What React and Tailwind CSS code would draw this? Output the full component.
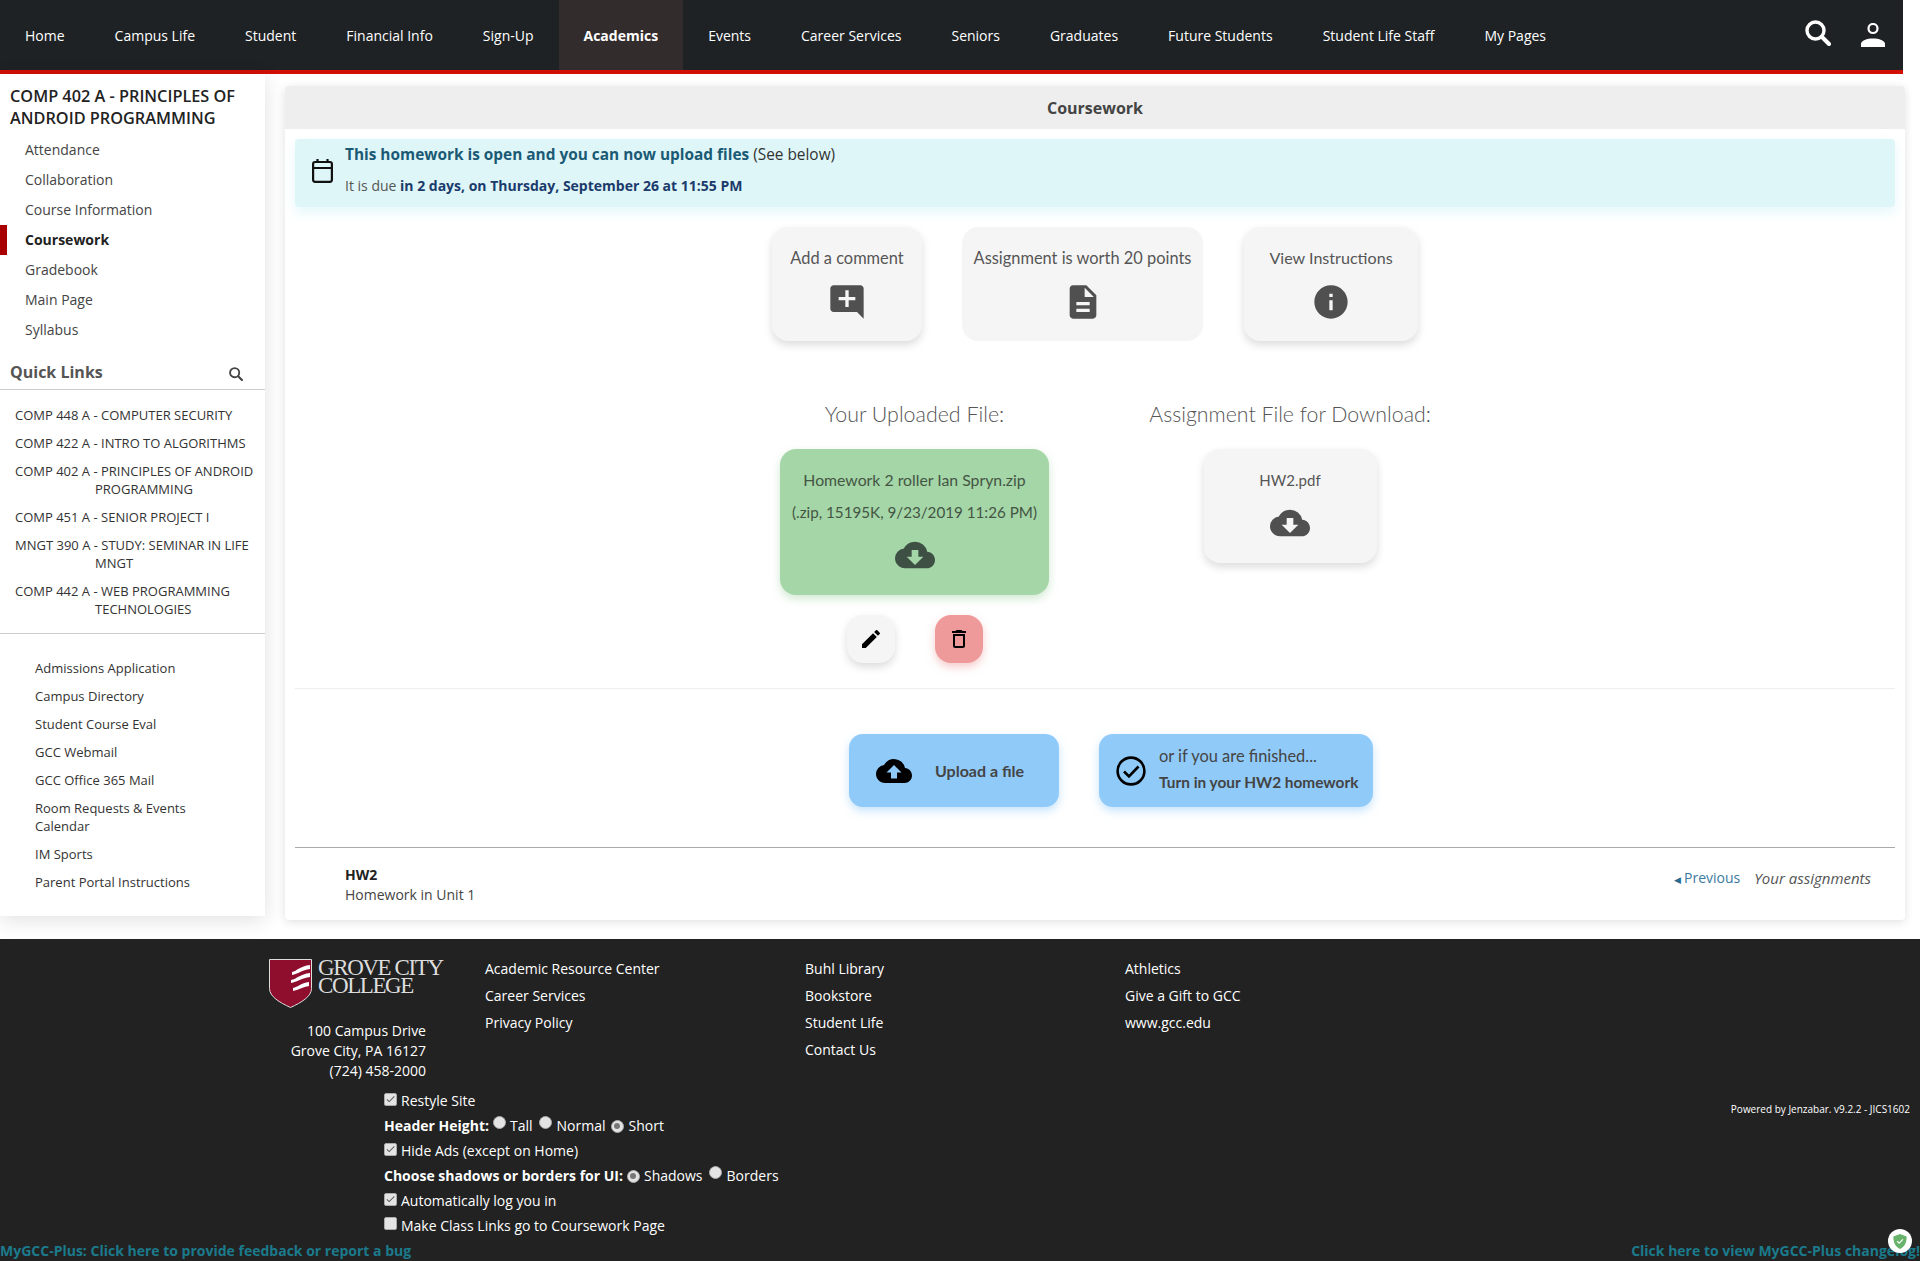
import React from "react";
import { MdAddComment, MdDescription, MdInfo, MdCloudDownload, MdCloudUpload, MdEdit, MdDeleteOutline, MdCheck } from "react-icons/md";

const nav = ["Home","Campus Life","Student","Financial Info","Sign-Up","Academics","Events","Career Services","Seniors","Graduates","Future Students","Student Life Staff","My Pages"];
const course = ["Attendance","Collaboration","Course Information","Coursework","Gradebook","Main Page","Syllabus"];
const quick = ["COMP 448 A - COMPUTER SECURITY","COMP 422 A - INTRO TO ALGORITHMS","COMP 402 A - PRINCIPLES OF ANDROID PROGRAMMING","COMP 451 A - SENIOR PROJECT I","MNGT 390 A - STUDY: SEMINAR IN LIFE MNGT","COMP 442 A - WEB PROGRAMMING TECHNOLOGIES"];
const misc = ["Admissions Application","Campus Directory","Student Course Eval","GCC Webmail","GCC Office 365 Mail","Room Requests & Events Calendar","IM Sports","Parent Portal Instructions"];
const open = "font-['Open_Sans',sans-serif]";
const card = "font-['Lato',sans-serif]";

function SearchIcon({ className }) {
  return (
    <svg viewBox="0 0 26 26" className={className} fill="none" stroke="currentColor">
      <circle cx="10.500" cy="10.500" r="8.500" strokeWidth="3.400" />
      <path d="M17 17l7 7" strokeWidth="4" strokeLinecap="round" />
    </svg>
  );
}
function Check({ on }) {
  return (
    <span className="mr-[4px] inline-flex h-[13px] w-[13px] items-center justify-center rounded-[2px] border border-[#aaa] bg-[#e4e4e4] align-[1px]">
      {on && <MdCheck className="text-[12px] text-[#555]" />}
    </span>
  );
}
function Radio({ on, className = "mx-[4px]" }) {
  return (
    <span className={`inline-flex h-[13px] w-[13px] items-center justify-center rounded-full border border-[#aaa] bg-[#e4e4e4] align-[2px] ${className}`}>
      {on && <span className="h-[6px] w-[6px] rounded-full bg-[#777]" />}
    </span>
  );
}
function Tile({ w, h = "h-[114px]", bg = "bg-[#f5f5f5]", shadow = "shadow-[0_4px_8px_rgba(0,0,0,0.14)]", children }) {
  return <div className={`flex flex-col items-center rounded-[16px] ${w} ${h} ${bg} ${shadow} ${card} text-[#555]`}>{children}</div>;
}

export default function App() {
  return (
    <div className={`w-[1920px] overflow-hidden bg-white ${open} text-[14px] text-[#333]`}>
      <header className="flex h-[74px] w-[1903px] border-b-[4px] border-[#d10f02] bg-[#1e2224] text-white">
        {nav.map((n) => (
          <a key={n} className={`flex h-full items-center px-[25px] ${n === "Academics" ? "bg-[#332c2c] font-bold" : ""}`}>{n}</a>
        ))}
        <div className="ml-auto flex items-center gap-[30px] pr-[18px]">
          <SearchIcon className="mb-[4px] h-[26px] w-[26px]" />
          <svg viewBox="0 0 24 24" className="h-[24px] w-[24px]">
            <circle cx="12" cy="5.500" r="4.500" fill="none" stroke="currentColor" strokeWidth="2.200" />
            <path d="M0 24v-3c0-3.500 6-5.500 12-5.500s12 2 12 5.500v3z" fill="currentColor" />
          </svg>
        </div>
      </header>

      <div className="flex h-[865px] items-start">
        <aside className="h-[842px] w-[265px] shrink-0 bg-white shadow-[0_4px_20px_rgba(0,0,0,0.12)]">
          <h2 className="px-[10px] pt-[11px] text-[16.300px] leading-[22px] font-semibold text-[#222]">COMP 402 A - PRINCIPLES OF ANDROID PROGRAMMING</h2>
          <ul className="mt-[6px]">
            {course.map((c) => (
              <li key={c} className={`h-[30px] border-l-[7px] pl-[18px] leading-[30px] ${c === "Coursework" ? "border-[#a80000] font-bold text-[#222]" : "border-transparent text-[#444]"}`}>{c}</li>
            ))}
          </ul>
          <div className="mt-[15px] flex h-[30px] items-center justify-between border-b border-[#ccc] pr-[22px] pl-[10px] pb-[5px]">
            <span className="text-[16px] font-bold text-[#555]">Quick Links</span>
            <SearchIcon className="mt-[3px] h-[14px] w-[14px] text-[#444]" />
          </div>
          <ul className="border-b border-[#ccc] pt-[11px] pb-[10px] text-[13px] leading-[18px] text-[#333]">
            {quick.map((q) => (
              <li key={q} className="py-[5px] pr-[5px] pl-[95px] -indent-[80px]">{q}</li>
            ))}
          </ul>
          <ul className="pt-[20px] pr-[50px] pl-[35px] text-[13px] leading-[18px] text-[#333]">
            {misc.map((m) => <li key={m} className="py-[5px]">{m}</li>)}
          </ul>
        </aside>

        <main className="mt-[12px] ml-[20px] h-[834px] w-[1620px] shrink-0 rounded-[4px] bg-white shadow-[0_2px_10px_rgba(0,0,0,0.12)]">
          <div className="flex h-[43px] items-center justify-center rounded-t-[4px] bg-[#eee] text-[16px] font-bold text-[#444]">Coursework</div>
          <div className="px-[10px] pt-[10px]">
            <div className="flex h-[68px] items-center rounded-[4px] bg-[#dff6f8] pl-[17px] shadow-[0_6px_12px_rgba(128,222,234,0.2)]">
              <svg viewBox="0 0 21 24" className="mr-[12px] mb-[5px] h-[24px] w-[21px] text-[#111]" fill="none" stroke="currentColor" strokeWidth="2.200">
                <rect x="1.100" y="3" width="18.800" height="19.800" rx="2" />
                <path d="M1 9h19M5.500 0v4M15.500 0v4" />
              </svg>
              <div>
                <p className="mb-[11px] -mt-[6px] text-[15.400px] leading-[20px] text-[#333]"><b className="font-bold text-[#1a5a75]">This homework is open and you can now upload files</b> (See below)</p>
                <p className="leading-[20px] text-[#555]">It is due <b className="font-bold text-[#1a3b6b]">in 2 days, on Thursday, September 26 at 11:55 PM</b></p>
              </div>
            </div>

            <div className="mt-[20px] ml-[477px] flex">
              <Tile w="w-[150px]">
                <span className="mt-[20px] text-[16.400px] leading-[22px]">Add a comment</span>
                <MdAddComment className="mt-[13px] text-[40px] text-[#505050]" />
              </Tile>
              <div className="ml-[40px]"><Tile w="w-[241px]" shadow="">
                <span className="mt-[20px] text-[16.400px] leading-[22px]">Assignment is worth 20 points</span>
                <MdDescription className="mt-[13px] text-[40px] text-[#505050]" />
              </Tile></div>
              <div className="ml-[41px]"><Tile w="w-[174px]">
                <span className="mt-[20px] text-[16.100px] leading-[22px]">View Instructions</span>
                <MdInfo className="mt-[13px] text-[40px] text-[#505050]" />
              </Tile></div>
            </div>

            <div className="mt-[59px] flex items-start">
              <div className="ml-[475px] flex w-[289px] flex-col items-center">
                <h3 className="text-[21.400px] leading-[28px] font-light text-[#555] font-['Lato',sans-serif]">Your Uploaded File:</h3>
                <div className={`mt-[21px] flex h-[146px] w-[269px] flex-col items-center rounded-[16px] bg-[#a5d6a7] shadow-[0_4px_8px_rgba(165,214,167,0.5)] ${card} text-[#454]`}>
                  <span className="mt-[20px] text-[15.800px] leading-[22px]">Homework 2 roller Ian Spryn.zip</span>
                  <span className="mt-[10px] text-[15.200px] leading-[22px]">(.zip, 15195K, 9/23/2019 11:26 PM)</span>
                  <MdCloudDownload className="mt-[12px] text-[40px] text-[#3e4f44]" />
                </div>
                <div className="mt-[20px] flex gap-[40px]">
                  <div className="flex h-[48px] w-[48px] items-center justify-center rounded-[16px] bg-[#f5f5f5] shadow-[0_4px_8px_rgba(0,0,0,0.14)]"><MdEdit className="text-[24px] text-black" /></div>
                  <div className="flex h-[48px] w-[48px] items-center justify-center rounded-[16px] bg-[#ef9a9a] shadow-[0_4px_8px_rgba(239,154,154,0.5)]"><MdDeleteOutline className="text-[24px] text-black" /></div>
                </div>
              </div>
              <div className="ml-[91px] flex w-[280px] flex-col items-center">
                <h3 className="text-[21.300px] leading-[28px] font-light whitespace-nowrap text-[#555] font-['Lato',sans-serif]">Assignment File for Download:</h3>
                <div className="mt-[21px]"><Tile w="w-[173px]">
                  <span className="mt-[20px] text-[15px] leading-[22px]">HW2.pdf</span>
                  <MdCloudDownload className="mt-[12px] text-[40px] text-[#505050]" />
                </Tile></div>
              </div>
            </div>

            <div className="mt-[25px] border-t border-[#eee]" />

            <div className={`mt-[45px] ml-[554px] flex gap-[40px] ${card} text-[#444]`}>
              <div className="flex h-[73px] w-[210px] items-center rounded-[14px] bg-[#90caf9] pl-[27px] shadow-[0_4px_8px_rgba(144,202,249,0.5)]">
                <MdCloudUpload className="text-[36px] text-black" />
                <span className="ml-[23px] text-[16px] font-bold">Upload a file</span>
              </div>
              <div className="flex h-[73px] w-[274px] items-center rounded-[14px] bg-[#90caf9] pl-[17px] shadow-[0_4px_8px_rgba(144,202,249,0.5)]">
                <svg viewBox="0 0 30 30" className="h-[30px] w-[30px] text-black" fill="none" stroke="currentColor" strokeWidth="2.600"><circle cx="15" cy="15" r="13.400" /><path d="M8 15.500l5 5 9.500-10" /></svg>
                <div className="ml-[13px] leading-[26px]">
                  <div className="-mt-[3px] text-[16.400px]">or if you are finished...</div>
                  <div className="text-[15.400px] font-bold">Turn in your HW2 homework</div>
                </div>
              </div>
            </div>

            <div className="mt-[40px] flex h-[73px] border-t border-[#aaa] pt-[17px] pr-[24px] pl-[50px] leading-[20px]">
              <div>
                <div className="font-bold text-[#222]">HW2</div>
                <div className="text-[#444]">Homework in Unit 1</div>
              </div>
              <div className="ml-auto flex gap-[14px] pt-[3px]">
                <span className="text-[#3b7a9e]"><span className="mr-[3px] text-[9px] text-[#2a6a8e]">◀</span>Previous</span>
                <i className="text-[15px] text-[#555]">Your assignments</i>
              </div>
            </div>
          </div>
        </main>
      </div>

      <footer className="relative h-[322px] bg-[#222] text-white">
        <div className="flex pt-[20px]">
          <div className="ml-[269px] w-[216px]">
            <div className="flex">
              <svg viewBox="0 0 43 49" className="h-[49px] w-[43px]">
                <path d="M.5.500h42v29c0 8-10 14-21 19C10.500 43.500.500 37.500.500 29.500z" fill="#8f0e2e" stroke="#ddd" strokeWidth="1" />
                <path d="M23 13c5-1 8-6 18-7v4c-8 1-12 5-18 6zM22 21c6-1 9-6 19-7v4c-8 1-13 5-19 6zM24 29c5-1 8-5 16-6v4c-6 1-11 4-16 5z" fill="#fff" />
              </svg>
              <div className="ml-[6px] font-['Liberation_Serif',serif] text-[23px] leading-[18px] tracking-[-1.400px] text-[#ddd]">GROVE CITY<br />COLLEGE</div>
            </div>
            <address className="mt-[13px] w-[157px] text-right leading-[20px] not-italic">100 Campus Drive<br />Grove City, PA 16127<br />(724) 458-2000</address>
          </div>
          <ul className="-mt-[4px] w-[320px] leading-[27px]"><li>Academic Resource Center</li><li>Career Services</li><li>Privacy Policy</li></ul>
          <ul className="-mt-[4px] w-[320px] leading-[27px]"><li>Buhl Library</li><li>Bookstore</li><li>Student Life</li><li>Contact Us</li></ul>
          <ul className="-mt-[4px] leading-[27px]"><li>Athletics</li><li>Give a Gift to GCC</li><li>www.gcc.edu</li></ul>
        </div>
        <div className="mt-[7px] flex items-start justify-between pr-[10px] pl-[384px]">
          <div className="leading-[25px]">
            <div><Check on />Restyle Site</div>
            <div><b>Header Height:</b><Radio />Tall<Radio className="mr-[5px] ml-[6px]" />Normal<Radio className="mx-[5px]" on />Short</div>
            <div><Check on />Hide Ads (except on Home)</div>
            <div><b>Choose shadows or borders for UI:</b><Radio on />Shadows<Radio className="mr-[5px] ml-[6px]" />Borders</div>
            <div><Check on />Automatically log you in</div>
            <div><Check />Make Class Links go to Coursework Page</div>
          </div>
          <div className="mt-[14px] text-[10px] leading-[14px]">Powered by Jenzabar. v9.2.2 - JICS1602</div>
        </div>
        <div className="flex justify-between whitespace-nowrap font-bold leading-[25px] text-[#1b7a8c]">
          <span>MyGCC-Plus: Click here to provide feedback or report a bug</span>
          <span>Click here to view MyGCC-Plus changelog!</span>
        </div>
        <div className="absolute right-[8px] bottom-[8px] flex h-[24px] w-[24px] items-center justify-center rounded-full bg-white">
          <svg viewBox="0 0 16 18" className="h-[15px] w-[14px]"><path d="M8 0l8 3c0 7-2 12-8 15C2 15 0 10 0 3z" fill="#68b36b" /><path d="M4.500 8.500l2.500 2.500 4.500-4.500" fill="none" stroke="#fff" strokeWidth="1.500" /></svg>
        </div>
      </footer>
    </div>
  );
}
